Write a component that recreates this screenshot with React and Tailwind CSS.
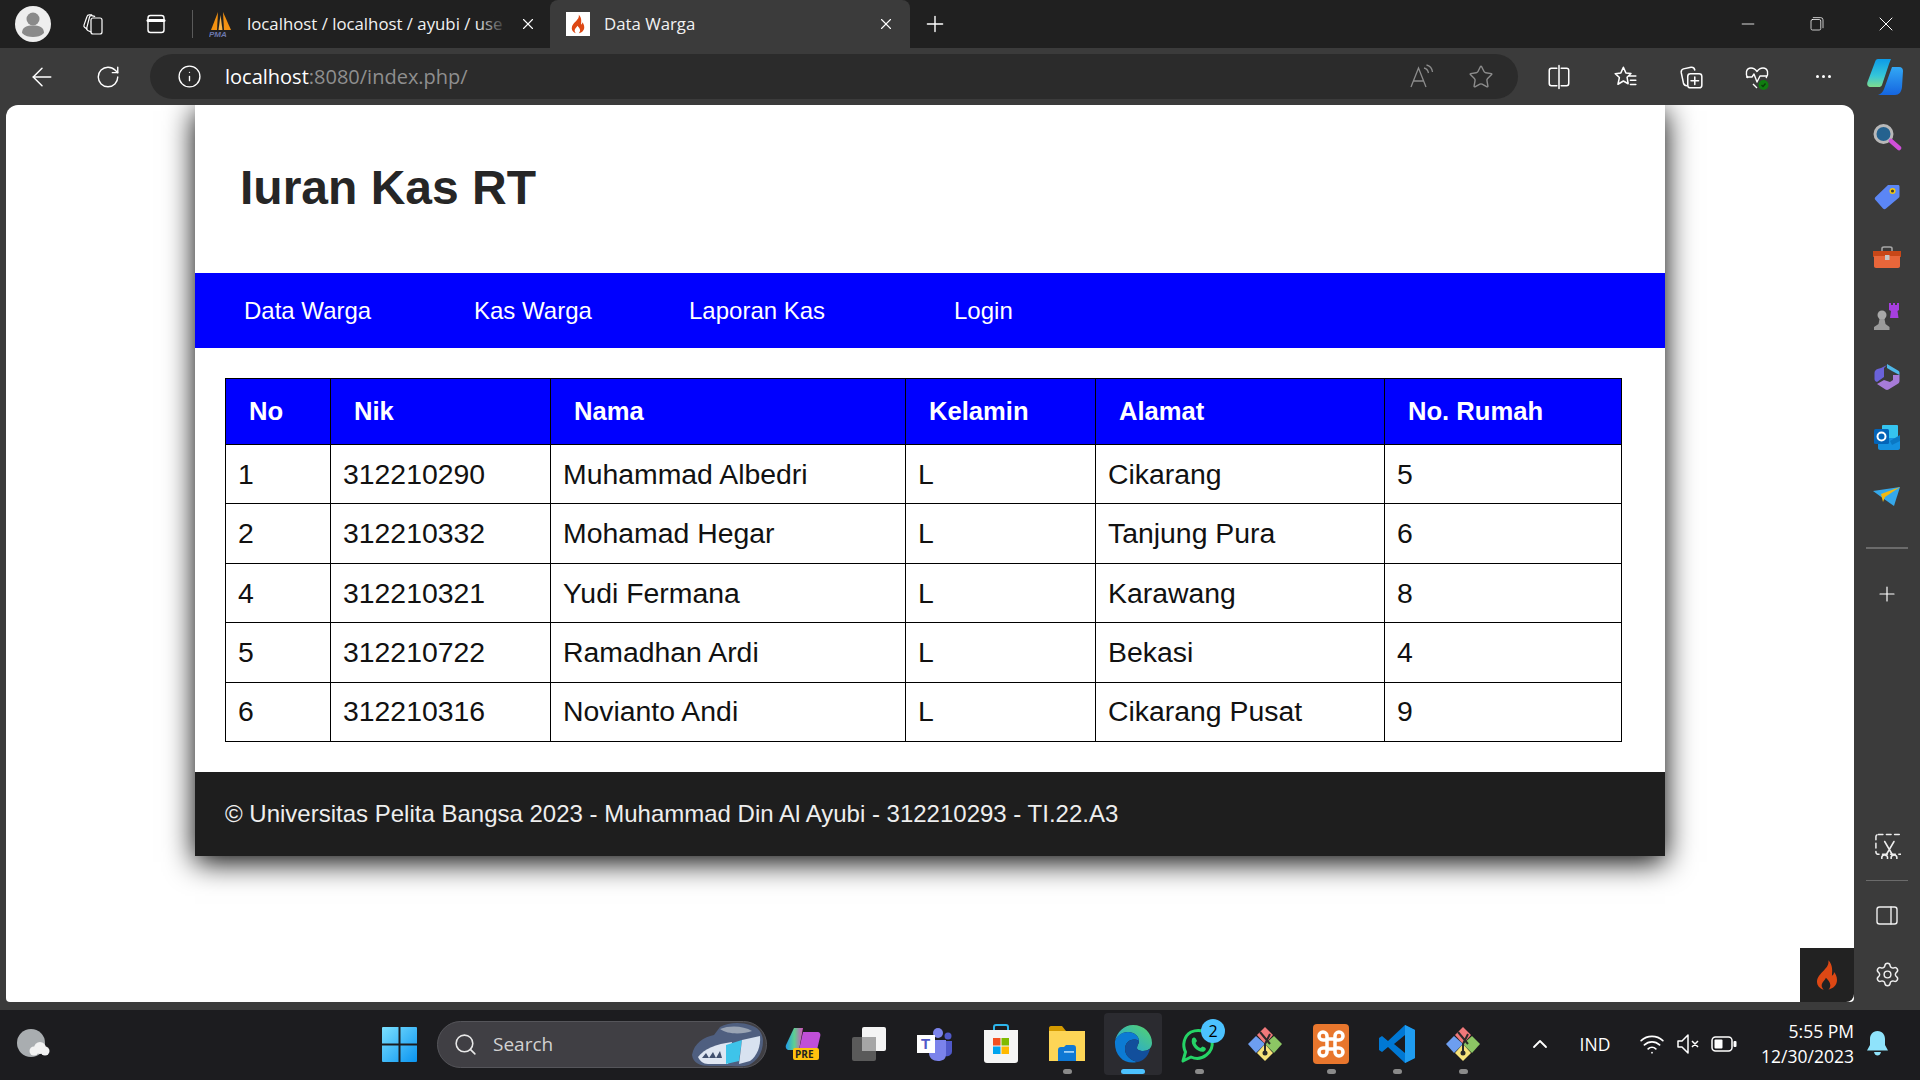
import React from "react";
import { Search, ChevronUp, Settings, Plus, X, Minus, RotateCw, ArrowLeft, Info, Star, Wifi } from "lucide-react";

const warga = [
  { no: 1, nik: "312210290", nama: "Muhammad Albedri", jk: "L", alamat: "Cikarang", rumah: 5 },
  { no: 2, nik: "312210332", nama: "Mohamad Hegar", jk: "L", alamat: "Tanjung Pura", rumah: 6 },
  { no: 4, nik: "312210321", nama: "Yudi Fermana", jk: "L", alamat: "Karawang", rumah: 8 },
  { no: 5, nik: "312210722", nama: "Ramadhan Ardi", jk: "L", alamat: "Bekasi", rumah: 4 },
  { no: 6, nik: "312210316", nama: "Novianto Andi", jk: "L", alamat: "Cikarang Pusat", rumah: 9 },
];

const headers = ["No", "Nik", "Nama", "Kelamin", "Alamat", "No. Rumah"];

function Flame({ size = 24, color = "#dd4814" }) {
  return (
    <svg width={size} height={size} viewBox="0 0 24 24">
      <path
        fill={color}
        d="M13 1c.6 3.2-1.2 5.300-3.200 7.400C7.300 11 4.500 13.500 4.500 17c0 2.800 2 5 5 6-1.500-1.500-2-3.200-1-5 .7-1.300 2-2.300 2.700-4 1.300 1.300 3.300 3.500 3.300 5.600 0 1.400-.6 2.600-1.500 3.400 3.700-.8 6.500-3.400 6.500-7.200 0-2.500-1-4.500-2.300-6 .1 1.300-.4 2.300-1.500 2.800C16 9 16.500 4.500 13 1z"
      />
    </svg>
  );
}

function WinIcon({ children, size = 24, stroke = "white", width = 1.4 }) {
  return (
    <svg width={size} height={size} viewBox="0 0 24 24" fill="none" stroke={stroke} strokeWidth={width} strokeLinecap="round" strokeLinejoin="round">
      {children}
    </svg>
  );
}

function TabBar() {
  return (
    <div className="flex h-12 items-center bg-[#202020] text-white">
      <div className="flex w-[66px] justify-center pl-0">
        <svg width="36" height="36" viewBox="0 0 36 36">
          <circle cx="18" cy="18" r="18" fill="#eeeeee" />
          <circle cx="18" cy="13" r="6.500" fill="#8a8a8a" />
          <path d="M7 27c0-6 5-7.500 11-7.500S29 21 29 27c-3 3-7 4-11 4s-8-1-11-4z" fill="#8a8a8a" />
        </svg>
      </div>
      <div className="flex w-[54px] justify-center">
        <WinIcon width={1.2}>
          <rect x="10" y="6" width="11" height="16" rx="2" />
          <path d="M10 20 6.800 18.500c-1-.5-1.400-1.400-1.100-2.400L8.500 5c.3-1 1.200-1.500 2.200-1.300l3 .7" />
          <path d="M6 17 3.800 15.500c-.9-.6-1.100-1.500-.8-2.400L6 4.500c.3-1 1.200-1.700 2.200-1.700h2.500" />
        </WinIcon>
      </div>
      <div className="flex w-[72px] justify-center">
        <WinIcon>
          <rect x="4" y="3.500" width="16" height="17" rx="2.500" />
          <path d="M4 8.500h16" strokeWidth="3" />
        </WinIcon>
      </div>
      <div className="h-7 w-px bg-[#5a5a5a]" />
      <div className="ml-[16px] flex w-[341px] items-center">
        <svg width="24" height="26" viewBox="0 0 24 26">
          <path d="M9 1 2 19h6z" fill="#f29111" />
          <path d="M14 1l8 18h-7z" fill="#f29111" />
          <path d="M11.500 4 9.500 19h4z" fill="#f7b64d" />
          <text x="0" y="25.500" fontSize="8" fontStyle="italic" fontWeight="700" fill="#6c78af" fontFamily="'Liberation Sans', sans-serif">PMA</text>
        </svg>
        <span className="relative ml-[14px] w-[261px] overflow-hidden whitespace-nowrap font-['Open_Sans',sans-serif] text-[16.800px] text-[#f2f2f2]">
          localhost / localhost / ayubi / use
          <span className="absolute inset-y-0 right-0 w-8 bg-gradient-to-r from-transparent to-[#202020]" />
        </span>
        <X className="ml-[11px]" size={18} strokeWidth={1.500} />
      </div>
      <div className="flex h-12 w-[360px] items-center rounded-t-lg bg-[#3b3b3b]">
        <div className="ml-4 flex h-6 w-6 items-center justify-center bg-white">
          <Flame size={20} />
        </div>
        <span className="ml-[14px] font-['Open_Sans',sans-serif] text-[16.800px] text-[#f2f2f2]">Data Warga</span>
        <X className="ml-auto mr-[15px]" size={18} strokeWidth={1.500} />
      </div>
      <Plus className="ml-[12px]" size={26} strokeWidth={1.300} />
      <div className="ml-auto flex items-center">
        <div className="flex w-[69px] justify-center">
          <Minus size={20} strokeWidth={1} />
        </div>
        <div className="flex w-[69px] justify-center">
          <WinIcon size={18} width={1}>
            <rect x="4" y="6" width="13" height="14" rx="2" />
            <path d="M7 3.500h10a3 3 0 0 1 3 3V17" />
          </WinIcon>
        </div>
        <div className="flex w-[69px] justify-center">
          <X size={24} strokeWidth={1} />
        </div>
      </div>
    </div>
  );
}

function Toolbar() {
  return (
    <div className="flex h-[57px] items-center bg-[#3b3b3b] text-white">
      <div className="flex w-[84px] justify-center">
        <ArrowLeft size={30} strokeWidth={1.200} />
      </div>
      <div className="flex w-[48px] justify-center">
        <RotateCw size={26} strokeWidth={1.300} />
      </div>
      <div className="ml-[18px] flex h-[45px] w-[1368px] items-center rounded-full bg-[#2b2b2b]">
        <Info className="ml-[27px]" size={25} strokeWidth={1.300} />
        <span className="ml-[23px] font-['Open_Sans',sans-serif] text-[20px] text-[#8f8f8f]">
          <span className="text-white">localhost</span>:8080/index.php/
        </span>
        <div className="ml-auto flex items-center text-[#8c8c8c]">
          <svg width="28" height="28" viewBox="0 0 28 28" fill="none" stroke="currentColor" strokeWidth="1.300">
            <path d="M3 24 10.500 5 18 24M5.500 18h10" />
            <path d="M16 5c2.500.5 4 2.500 4.500 5M18.500 2c3.500.7 5.500 3.500 6 7" />
          </svg>
          <Star className="ml-[32px] mr-[24px]" size={26} strokeWidth={1.300} />
        </div>
      </div>
      <div className="ml-[8px] flex items-center">
        <div className="flex w-[66px] justify-center">
          <WinIcon size={26}>
            <path d="M10 4H5a2 2 0 0 0-2 2v12a2 2 0 0 0 2 2h5M14 4h5a2 2 0 0 1 2 2v12a2 2 0 0 1-2 2h-5M12 1.500v21" />
          </WinIcon>
        </div>
        <div className="flex w-[66px] justify-center">
          <WinIcon size={26}>
            <path d="M10.500 3l2.300 5.200 4.700.5-3.600 3.500 1 6-4.400-2.500-5 3 1.300-6.200L3 8.900l5.200-.7zM16 11h6M17 15h5M17 19h5" />
          </WinIcon>
        </div>
        <div className="flex w-[66px] justify-center">
          <WinIcon size={26}>
            <rect x="9" y="9" width="13" height="13" rx="2.500" />
            <path d="M15.500 12v7M12 15.500h7M8 20c-1.500 0-2.500-.8-3-2.500L3 8c-.3-2 .5-3 2-3.500l7-1.500c1.500-.2 3 .5 3.500 2.500" />
          </WinIcon>
        </div>
        <div className="flex w-[66px] justify-center">
          <svg width="28" height="28" viewBox="0 0 28 28" fill="none" stroke="white" strokeWidth="1.400" strokeLinejoin="round">
            <path d="M5 15C2 11 3 5 8 5c3 0 5 2 6 3.500C15 7 17 5 20 5c5 0 6 6 3 10M10 21l4 4" />
            <path d="M3 14h6l2-3 3 8 3-6h7" />
            <circle cx="20.500" cy="22" r="5" fill="#107c10" stroke="none" />
            <path d="M18.500 22l1.500 1.500 2.500-3" stroke="#0a3d0a" />
          </svg>
        </div>
        <div className="flex w-[66px] justify-center gap-[3px]">
          <span className="h-[3px] w-[3px] rounded-full bg-white" />
          <span className="h-[3px] w-[3px] rounded-full bg-white" />
          <span className="h-[3px] w-[3px] rounded-full bg-white" />
        </div>
        <div className="flex w-[58px] justify-center">
          <svg width="38" height="38" viewBox="0 0 38 38">
            <defs>
              <linearGradient id="copA" x1="0" y1="0" x2="0" y2="1">
                <stop offset="0" stopColor="#0c9be8" />
                <stop offset="0.6" stopColor="#35c6d8" />
                <stop offset="1" stopColor="#7fdc8e" />
              </linearGradient>
              <linearGradient id="copB" x1="0" y1="0" x2="0" y2="1">
                <stop offset="0" stopColor="#32a8f5" />
                <stop offset="1" stopColor="#1565e0" />
              </linearGradient>
            </defs>
            <path d="M12 1h13l-2 5-7 21c-.5 1.500-2 2-3 2H5c-3 0-4.500-2-3.500-5L9 4c.5-2 1.500-3 3-3z" fill="url(#copA)" />
            <path d="M26 9h7c3 0 4 2 4 4l-1 16c-.5 5-3 8-7 8H12c3-1 5-3 6-6z" fill="url(#copB)" />
          </svg>
        </div>
      </div>
    </div>
  );
}

function SideSlot({ children }) {
  return <div className="flex h-[60px] items-center justify-center">{children}</div>;
}

function Sidebar() {
  return (
    <div className="flex w-[66px] flex-col items-stretch pt-[2px] text-white">
      <SideSlot>
        <svg width="30" height="28" viewBox="0 0 30 28">
          <circle cx="11.500" cy="11" r="8.500" fill="#25628f" stroke="#b8b8b8" strokeWidth="3" />
          <path d="M19 18l8 7" stroke="#cf4fd8" strokeWidth="4.500" strokeLinecap="round" />
        </svg>
      </SideSlot>
      <SideSlot>
        <svg width="26" height="26" viewBox="0 0 26 26">
          <path d="M14 1h10c1 0 1.500.6 1.500 1.500V12c0 1-.4 1.500-1 2L12 24.500c-1 1-2 1-3 0L1.500 16c-1-1-1-2 0-3z" fill="#5b86f5" />
          <circle cx="18.500" cy="7" r="2.300" fill="#3a3a3a" stroke="#f2c811" strokeWidth="1.500" />
        </svg>
      </SideSlot>
      <SideSlot>
        <svg width="28" height="22" viewBox="0 0 28 22">
          <path d="M9 5V2.500C9 1.500 10 1 11 1h6c1 0 2 .5 2 1.500V5" fill="none" stroke="#a8a8a8" strokeWidth="1.500" />
          <path d="M0 5h28v6H0z" fill="#c84718" />
          <path d="M1 10h26v10c0 1-.8 2-2 2H3c-1.200 0-2-1-2-2z" fill="#e8663a" />
          <rect x="12" y="9" width="4.500" height="5" fill="#c6c6c6" />
        </svg>
      </SideSlot>
      <SideSlot>
        <svg className="-mt-[3px]" width="28" height="28" viewBox="0 0 28 28">
          <path d="M16 1h2v2h2V1h2v2h2V1h2v7l-1.500 1 1 7H17l1-7L16 8z" fill="#a63fe0" />
          <circle cx="9" cy="13" r="4.500" fill="#a8a8a8" />
          <path d="M6.500 17h5l1 5 4 3v3H1v-3l4.500-3z" fill="#9a9a9a" />
        </svg>
      </SideSlot>
      <SideSlot>
        <svg width="26" height="28" viewBox="0 0 26 28">
          <path d="M13 1l11 6.500c1 .6 1.500 1.500 1.500 2.500v2L18 8 13 5z" fill="#4fb8e8" />
          <path d="M7 5l6-3-3 3v9l-7 5c-1.500-.5-2.500-1.500-2.500-3V10C.5 8 2 6.500 3.500 6z" fill="#6a62d9" />
          <path d="M25.500 12v6c0 1.500-1 2.500-2 3l-9 5.500c-1 .5-2 .5-3 0L3 21l7-4 6 2 3-2v-5z" fill="#a77bd8" />
        </svg>
      </SideSlot>
      <SideSlot>
        <svg width="26" height="26" viewBox="0 0 26 26">
          <rect x="8" y="1" width="16" height="14" rx="1" fill="#35c4f0" />
          <path d="M4 14h22v10c0 1-.8 2-2 2H6c-1 0-2-1-2-2z" fill="#1490df" />
          <path d="M26 11v6l-8 4-2-4z" fill="#0a78c4" />
          <rect x="0" y="5" width="15" height="15" rx="1.500" fill="#0364b8" />
          <circle cx="7.500" cy="12.500" r="4" fill="none" stroke="white" strokeWidth="2" />
        </svg>
      </SideSlot>
      <SideSlot>
        <svg width="28" height="20" viewBox="0 0 28 20">
          <path d="M0 4 27 0 21 19 11 12z" fill="#35a8ea" />
          <path d="M27 0 8 7l2 8 2-5z" fill="#f2b90f" />
        </svg>
      </SideSlot>
      <div className="mx-[12px] mb-[20px] mt-[20px] h-[2px] bg-[#6b6b6b]" />
      <div className="mt-[13px] flex justify-center">
        <Plus size={24} strokeWidth={1.200} />
      </div>
      <div className="mt-auto flex justify-center">
        <WinIcon size={28} width={1.300} stroke="#eeeeee">
          <rect x="2.500" y="3" width="23" height="17" rx="2" strokeDasharray="4 3" />
          <circle cx="10" cy="23" r="2.500" />
          <circle cx="18" cy="23" r="2.500" />
          <path d="M11 21 18 9M17 21 10 9" />
        </WinIcon>
      </div>
      <div className="mx-[12px] mb-[23px] mt-[21px] h-px bg-[#6b6b6b]" />
      <div className="flex justify-center">
        <WinIcon size={24} stroke="#eeeeee">
          <rect x="2" y="3" width="20" height="17" rx="2.500" />
          <path d="M16 3v17" />
        </WinIcon>
      </div>
      <div className="mb-[14px] mt-[33px] flex justify-center">
        <Settings size={27} strokeWidth={1.300} color="#eeeeee" />
      </div>
    </div>
  );
}

function WebPage() {
  return (
    <div className="relative min-w-0 flex-1 overflow-hidden rounded-t-xl rounded-b bg-white font-['Liberation_Sans',Arial,sans-serif]">
      <div className="mx-auto w-[1470px] bg-white shadow-[0_6px_28px_rgba(0,0,0,1)]">
        <header className="flex h-[168px] items-center pb-[2px] pl-[45px]">
          <h1 className="text-[48px] font-bold text-[#262626]">Iuran Kas RT</h1>
        </header>
        <nav className="flex h-[75px] items-center bg-[#0000ff] pl-[49px] text-[24px] text-white">
          <a className="w-[230px]">Data Warga</a>
          <a className="w-[215px]">Kas Warga</a>
          <a className="w-[265px]">Laporan Kas</a>
          <a>Login</a>
        </nav>
        <section className="px-[30px] py-[30px]">
          <table className="w-[1396px] table-fixed border-collapse text-[28.400px] text-[#111111]">
            <colgroup>
              <col className="w-[105px]" />
              <col className="w-[220px]" />
              <col className="w-[355px]" />
              <col className="w-[190px]" />
              <col className="w-[289px]" />
              <col className="w-[237px]" />
            </colgroup>
            <thead>
              <tr className="h-[66px] bg-[#0000ff] text-[25.600px] text-white">
                {headers.map((h) => (
                  <th key={h} className="border border-black pl-[23px] text-left font-bold">
                    {h}
                  </th>
                ))}
              </tr>
            </thead>
            <tbody>
              {warga.map((w) => (
                <tr key={w.no} className="h-[59.400px]">
                  <td className="border border-black pl-[12px]">{w.no}</td>
                  <td className="border border-black pl-[12px]">{w.nik}</td>
                  <td className="border border-black pl-[12px]">{w.nama}</td>
                  <td className="border border-black pl-[12px]">{w.jk}</td>
                  <td className="border border-black pl-[12px]">{w.alamat}</td>
                  <td className="border border-black pl-[12px]">{w.rumah}</td>
                </tr>
              ))}
            </tbody>
          </table>
        </section>
        <footer className="flex h-[84px] items-center bg-[#1e1e1e] pl-[30px] text-[24px] text-[#eeeeee]">
          © Universitas Pelita Bangsa 2023 - Muhammad Din Al Ayubi - 312210293 - TI.22.A3
        </footer>
      </div>
      <div className="absolute bottom-0 right-0 flex h-[54px] w-[54px] items-center justify-center rounded-br-lg bg-[#222222]">
        <Flame size={32} />
      </div>
    </div>
  );
}

function TaskSlot({ children, active, dot }) {
  return (
    <div className="relative flex h-[62px] w-[66px] items-center justify-center">
      {active && <span className="absolute inset-y-0 inset-x-[4px] rounded bg-[#2b2b30]" />}
      <span className="relative flex items-center justify-center">{children}</span>
      {dot && <span className="absolute bottom-[1px] h-[5px] w-[9px] rounded-full bg-[#8a8a8a]" />}
      {active && <span className="absolute bottom-[1px] h-[5px] w-6 rounded-full bg-[#4cc2ff]" />}
    </div>
  );
}

function GitIcon() {
  return (
    <svg width="36" height="36" viewBox="0 0 36 36">
      <path d="M18 1l8 8-8 9-8-9z" fill="#f0787a" />
      <path d="M1 18l8-8 9 8-9 9z" fill="#6d9ef0" />
      <path d="M35 18l-8-8-9 8 9 9z" fill="#8cc664" />
      <path d="M18 35l-8-8 8-9 8 9z" fill="#f6e27a" />
      <path d="M13 6l10 12M23 8l-5 10v10" stroke="#2a2a2a" strokeWidth="2" fill="none" />
      <circle cx="18" cy="27" r="2.500" fill="#2a2a2a" />
    </svg>
  );
}

function Taskbar() {
  return (
    <div className="flex h-[70px] items-center bg-[#1c1c1f] pb-[2px] font-['Open_Sans',sans-serif] text-white">
      <div className="flex w-[366px] pl-[16px]">
        <svg width="36" height="36" viewBox="0 0 36 36">
          <ellipse cx="15" cy="17" rx="14" ry="14" fill="#a9adb0" />
          <circle cx="24" cy="22" r="6" fill="#f2f2f2" />
          <circle cx="18" cy="25" r="4.500" fill="#f2f2f2" />
          <circle cx="29" cy="25" r="4.500" fill="#f2f2f2" />
        </svg>
      </div>
      <div className="flex w-[71px] justify-start pl-[16px]">
        <svg width="35" height="35" viewBox="0 0 35 35">
          <defs>
            <linearGradient id="winG" x1="0" y1="0" x2="1" y2="1">
              <stop offset="0" stopColor="#7be0ff" />
              <stop offset="1" stopColor="#0a94f0" />
            </linearGradient>
          </defs>
          <path d="M0 1a1 1 0 0 1 1-1h15.500v16.500H0zM18.500 0H34a1 1 0 0 1 1 1v15.500H18.500zM0 18.500h16.500V35H1a1 1 0 0 1-1-1zM18.500 18.500H35V34a1 1 0 0 1-1 1H18.500z" fill="url(#winG)" />
        </svg>
      </div>
      <div className="flex h-[47px] w-[330px] items-center rounded-full border border-[#55555a] bg-[#403f44]">
        <Search className="ml-[15px]" size={25} strokeWidth={1.500} color="#e8e8e8" />
        <span className="ml-[15px] text-[19px] text-[#d2d2d2]">Search</span>
        <svg className="ml-auto mr-[2px]" width="74" height="46" viewBox="0 0 74 46">
          <path d="M2 34C4 22 14 16 24 14L30 6c8-5 22-5 30-2 8 2 13 8 13 16 0 12-6 20-14 24-6 2-12 1-18 1H20C10 45 3 42 2 34z" fill="#4f5f80" />
          <path d="M8 36c6-8 18-13 34-15l-4 22H18C13 43 10 40 8 36z" fill="#dfe6f2" />
          <path d="M12 37l4-5 3 5 4-6 3 6 4-7 2 7z" fill="#41506f" />
          <path d="M36 24l16-5-3 21-13 3z" fill="#3ec4ea" />
          <path d="M52 19l18-4c1 10-3 20-10 25l-11 3z" fill="#d8e2f0" />
          <path d="M30 8c10-4 24-3 32 2-8 3-24 4-32-2z" fill="#9aa4b4" />
        </svg>
      </div>
      <div className="ml-[3px] flex items-center">
        <TaskSlot>
          <svg width="36" height="36" viewBox="0 0 36 36">
            <defs>
              <linearGradient id="copPre" x1="0" y1="0" x2="1" y2="0">
                <stop offset="0" stopColor="#1e9be8" />
                <stop offset="0.5" stopColor="#5fd08f" />
                <stop offset="1" stopColor="#d84fc0" />
              </linearGradient>
            </defs>
            <path d="M9 2h9l-4 22H4c-2 0-4-2-3-5z" fill="url(#copPre)" />
            <path d="M18 6h14c3 0 4 2 3 5l-3 13H14z" fill="#c04fd8" />
            <rect x="8" y="22" width="26" height="12" rx="2" fill="#ffc20e" />
            <text x="10" y="32" fontSize="10" fontWeight="700" fill="#222" fontFamily="'Open Sans', sans-serif">PRE</text>
          </svg>
        </TaskSlot>
        <TaskSlot>
          <svg width="36" height="36" viewBox="0 0 36 36">
            <rect x="1" y="11" width="24" height="24" rx="2" fill="#5a5a5a" />
            <rect x="11" y="1" width="24" height="24" rx="2" fill="#f4f4f4" />
            <rect x="11" y="11" width="14" height="14" fill="#a6a6a6" />
          </svg>
        </TaskSlot>
        <TaskSlot>
          <svg width="36" height="36" viewBox="0 0 36 36">
            <circle cx="21" cy="7" r="5" fill="#7b83eb" />
            <circle cx="31" cy="10" r="3.500" fill="#5059c9" />
            <path d="M26 15h9v10c0 4-3 6-9 5z" fill="#5059c9" />
            <path d="M12 14h17v14c0 5-3 7-8 7s-9-3-9-8z" fill="#7b83eb" />
            <rect x="0" y="9" width="18" height="18" fill="#ffffff" />
            <text x="4" y="23" fontSize="15" fontWeight="700" fill="#5059c9" fontFamily="'Liberation Sans', sans-serif">T</text>
          </svg>
        </TaskSlot>
        <TaskSlot>
          <svg width="36" height="40" viewBox="0 0 36 40">
            <path d="M11 7V3c0-1 1-2 2-2h10c1 0 2 1 2 2v4" fill="none" stroke="#2db4ea" strokeWidth="2" />
            <path d="M1 6h34v30c0 2-1 3-3 3H4c-2 0-3-1-3-3z" fill="#f5f5f5" />
            <rect x="10" y="14" width="7.500" height="7.500" fill="#f25022" />
            <rect x="18.500" y="14" width="7.500" height="7.500" fill="#7fba00" />
            <rect x="10" y="22.500" width="7.500" height="7.500" fill="#00a4ef" />
            <rect x="18.500" y="22.500" width="7.500" height="7.500" fill="#ffb900" />
          </svg>
        </TaskSlot>
        <TaskSlot dot>
          <svg width="36" height="36" viewBox="0 0 36 36">
            <path d="M0 2c0-1 .6-2 2-2h11l4 5h-17z" fill="#d49a00" />
            <path d="M0 5h36v30H0z" fill="#fdd556" />
            <path d="M9 24c0-2 1-3 3-3h3l2-2h7c2 0 3 1 3 3v13H9z" fill="#0f78d4" />
            <rect x="15" y="25" width="10" height="1.800" fill="#9fd0f5" />
          </svg>
        </TaskSlot>
        <TaskSlot active>
          <svg width="38" height="38" viewBox="0 0 38 38">
            <defs>
              <linearGradient id="edgeG" x1="0" y1="1" x2="1" y2="0">
                <stop offset="0" stopColor="#1fa0e8" />
                <stop offset="1" stopColor="#57d46a" />
              </linearGradient>
            </defs>
            <path d="M19 0C30 0 38 8 38 18c0 5-4 8-9 8-3 0-6-1-6-3 0-3 2-4 2-7 0-5-5-9-11-9S2 12 1 16C3 7 10 0 19 0z" fill="url(#edgeG)" />
            <path d="M1 16c2-6 8-9 13-9 6 0 11 4 11 9-7-4-14 1-14 8 0 6 5 11 12 13C11 40 0 31 1 16z" fill="#0c7bd4" />
            <path d="M11 24c0-7 7-12 14-8 0 3-2 4-2 7 0 2 3 3 6 3 3 0 5-1 7-2-2 8-8 13-13 13-7-2-12-7-12-13z" fill="#124f9c" />
          </svg>
        </TaskSlot>
        <TaskSlot dot>
          <svg width="38" height="40" viewBox="0 0 38 40">
            <path d="M3 37l2.500-9C2 21 4 12 11 8c9-4 19 0 21 9 2 11-10 21-21 16z" fill="none" stroke="#25d366" strokeWidth="3" strokeLinejoin="round" />
            <path d="M12 15c1-2 3-2 4 0l1 2-1.500 2c1 2.500 2.500 4 5 5l2-1.500 2.500 1c1.500 1 1 3-1 4-6 1.500-14-6-12-12.500z" fill="#25d366" />
          </svg>
          <span className="absolute -right-[7px] -top-[5px] flex h-6 w-6 items-center justify-center rounded-full bg-[#4cc2ff] text-[16px] text-black">2</span>
        </TaskSlot>
        <TaskSlot>
          <GitIcon />
        </TaskSlot>
        <TaskSlot dot>
          <svg width="36" height="40" viewBox="0 0 36 40">
            <rect x="0" y="0" width="36" height="40" rx="4" fill="#e8762d" />
            <path d="M14 15h8v10h-8zM14 15v-3a4 4 0 1 0-4 4h4M22 15v-3a4 4 0 1 1 4 4h-4M14 25v3a4 4 0 1 1-4-4h4M22 25v3a4 4 0 1 0 4-4h-4" fill="none" stroke="#ffffff" strokeWidth="3.500" />
          </svg>
        </TaskSlot>
        <TaskSlot dot>
          <svg width="36" height="38" viewBox="0 0 36 38">
            <path d="M26 0l10 5v28l-10 5L9 22l-6 5-3-2v-12l3-2 6 5z" fill="#0078d4" />
            <path d="M26 0l10 5v28l-10 5z" fill="#1f9cf0" />
            <path d="M26 10 15 19l11 9z" fill="#1c1c1f" />
          </svg>
        </TaskSlot>
        <TaskSlot dot>
          <GitIcon />
        </TaskSlot>
      </div>
      <div className="ml-[32px] flex w-[24px] justify-center">
        <ChevronUp size={26} strokeWidth={1.800} />
      </div>
      <span className="ml-[23px] w-[40px] text-center text-[17.500px]">IND</span>
      <Wifi className="ml-[24px]" size={26} strokeWidth={1.600} />
      <svg className="ml-[11px]" width="26" height="24" viewBox="0 0 26 24" fill="none" stroke="white" strokeWidth="1.500" strokeLinejoin="round">
        <path d="M2 9v6h4l6 6V3L6 9zM16 9l6 6M22 9l-6 6" />
      </svg>
      <svg className="ml-[9px]" width="26" height="18" viewBox="0 0 26 18">
        <rect x="1" y="2" width="20" height="14" rx="3.500" fill="none" stroke="white" strokeWidth="1.500" />
        <rect x="3.500" y="4.500" width="8" height="9" rx="1" fill="white" />
        <rect x="22.500" y="6" width="3" height="6" rx="1" fill="white" />
      </svg>
      <div className="ml-auto w-[110px] text-right text-[17.500px] leading-[25px]">
        <div>5:55 PM</div>
        <div>12/30/2023</div>
      </div>
      <div className="ml-[13px] mr-[32px] flex">
        <svg width="21" height="26" viewBox="0 0 21 26">
          <path d="M10.500 0c5 0 7.500 4 7.500 8v6l3 5.500H0L3 14V8c0-4 2.500-8 7.500-8z" fill="#8fe3fb" />
          <path d="M7 21h7c-.5 2.500-1.800 3.500-3.500 3.500S7.500 23.500 7 21z" fill="#8fe3fb" />
        </svg>
      </div>
    </div>
  );
}

export default function App() {
  return (
    <div className="flex h-screen w-full flex-col overflow-hidden bg-[#3b3b3b]">
      <TabBar />
      <Toolbar />
      <div className="flex min-h-0 flex-1 pb-2 pl-[6px]">
        <WebPage />
        <Sidebar />
      </div>
      <Taskbar />
    </div>
  );
}
